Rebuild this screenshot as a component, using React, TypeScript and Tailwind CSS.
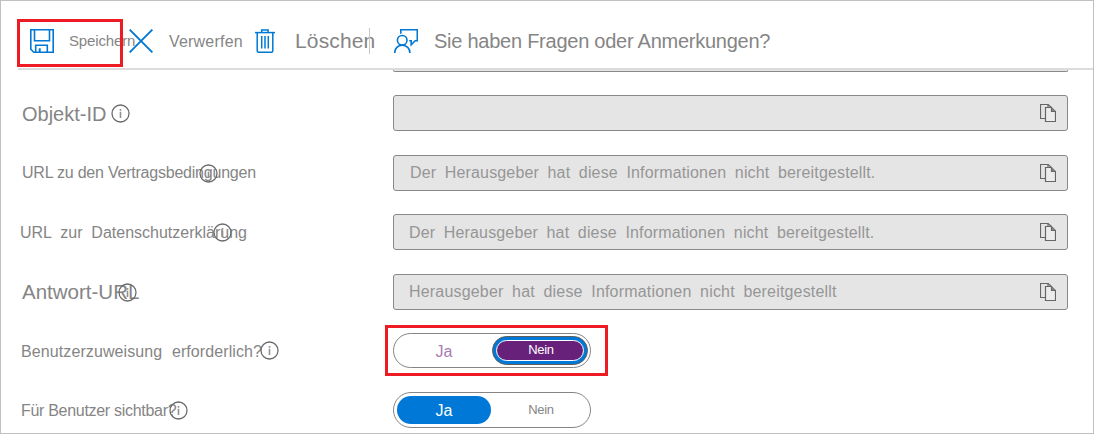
import type { ReactNode } from "react";

function InfoIcon() {
  return (
    <svg className="h-[19px] w-[19px] shrink-0" viewBox="0 0 19 19" fill="none">
      <circle cx="9.5" cy="9.5" r="8.5" stroke="#6a6a6a" strokeWidth="1.3" />
      <path d="M9.5 7.8V14M9.5 5v1.7" stroke="#909090" strokeWidth="1.6" />
    </svg>
  );
}

function CopyIcon() {
  return (
    <svg className="h-[18px] w-4 shrink-0" viewBox="0 0 16 18" fill="none" stroke="#666" strokeWidth="1.2">
      <path d="M5.5 14.5h-5V.5H8l3.5 3" />
      <path d="M5.5 3.5h6l4 4v10h-10z" fill="#ececec" />
      <path d="M11.5 3.5v4h4" fill="#888" />
      <path d="M8 .5v3" />
    </svg>
  );
}

function SaveIcon() {
  return (
    <svg className="h-6 w-6 shrink-0" viewBox="0 0 24 24" fill="none" stroke="#0078d4" strokeWidth="1.6">
      <path d="M.8.8h22.4v22.4H3.8l-3-3z" />
      <path d="M4.5.8v10.9h15V.8" />
      <path d="M5.7 23v-6.7h11.6V23" />
      <path d="M9.7 23v-3.7" strokeWidth="2" />
    </svg>
  );
}

function DiscardIcon() {
  return (
    <svg className="h-6 w-6 shrink-0" viewBox="0 0 24 24" fill="none" stroke="#0078d4" strokeWidth="1.9">
      <path d="M.6.6l22.8 22.8M23.4.6L.6 23.4" />
    </svg>
  );
}

function TrashIcon() {
  return (
    <svg className="h-6 w-5 shrink-0" viewBox="0 0 20 24" fill="none" stroke="#0078d4" strokeWidth="1.5">
      <path d="M0 3.6h20" />
      <path d="M6.7 3.5V.9h6.4v2.6" />
      <path d="M2.2 3.6v18.2q0 1.5 1.5 1.5h12.7q1.4 0 1.4-1.5V3.6" />
      <path d="M6.7 7v12.5M10 7v12.5M13.3 7v12.5" />
    </svg>
  );
}

function FeedbackIcon() {
  return (
    <svg className="h-6 w-6 shrink-0" viewBox="0 0 24 24" fill="none" stroke="#0078d4" strokeWidth="1.6">
      <path d="M6.8 4.8V.8h16.5v11h-2.1l-4 4v-4h-2" />
      <circle cx="8.2" cy="11.3" r="4.8" />
      <path d="M.7 24c0-4.5 3.2-7.8 7.6-7.8s7.6 3.3 7.6 7.8" />
    </svg>
  );
}

function Row({ label, className, children }: { label: ReactNode; className: string; children: ReactNode }) {
  return (
    <div className={`flex shrink-0 items-center ${className}`}>
      <div className="flex w-[392px] shrink-0 items-center whitespace-nowrap">
        {label}
        <InfoIcon />
      </div>
      {children}
    </div>
  );
}

function Field({ text, className = "" }: { text?: string; className?: string }) {
  return (
    <div className="flex h-9 w-[675px] items-center rounded-[3px] border border-[#888] bg-[#e5e5e5] pr-[11px]">
      <span className={`flex-1 whitespace-pre text-base leading-5 tracking-[0.15px] [word-spacing:4px] text-[#969696] ${className}`}>
        {text}
      </span>
      <CopyIcon />
    </div>
  );
}

export default function App() {
  return (
    <div className="relative flex h-[434px] w-[1094px] flex-col overflow-hidden border border-[#c0c0c0] bg-white font-['Liberation_Sans',Arial,sans-serif] text-[#858585]">
      <header className="ml-[17px] flex h-[69px] shrink-0 items-center whitespace-nowrap border-b-2 border-[#dcdcdc] pt-[13px]">
        <button className="relative flex w-[111px] shrink-0 items-center pl-3">
          <SaveIcon />
          <span className="ml-[15px] text-[15px] leading-5 tracking-[-0.15px]">Speichern</span>
          <span className="absolute -left-px -top-[10px] h-12 w-[106px] border-[3px] border-[#ed1c24]" />
        </button>
        <button className="flex w-[126px] shrink-0 items-center">
          <DiscardIcon />
          <span className="ml-4 pt-px text-base leading-5 tracking-[0.2px]">Verwerfen</span>
        </button>
        <button className="flex w-[114px] shrink-0 items-center">
          <TrashIcon />
          <span className="ml-5 text-[21px] leading-6 tracking-[0.15px]">Löschen</span>
        </button>
        <span className="mr-6 h-[26px] w-px bg-[#c8c6c4]" />
        <button className="flex shrink-0 items-center">
          <FeedbackIcon />
          <span className="ml-4 text-xl leading-6 tracking-[-0.25px]">Sie haben Fragen oder Anmerkungen?</span>
        </button>
      </header>

      <main className="flex flex-1 flex-col">
        <div className="ml-[392px] h-[2px] w-[675px] shrink-0 rounded-b-[3px] border-x border-b border-[#888] bg-[#e5e5e5]" />

        <Row className="mt-[23px] h-9" label={<span className="ml-[21px] w-[89px] shrink-0 pt-[2px] text-xl leading-6">Objekt-ID</span>}>
          <Field />
        </Row>
        <Row className="mt-6 h-9" label={<span className="ml-[21px] w-[177px] shrink-0 text-base leading-5 tracking-[-0.22px]">URL zu den Vertragsbedingungen</span>}>
          <Field className="pl-4" text="Der Herausgeber hat diese Informationen nicht bereitgestellt." />
        </Row>
        <Row className="mt-[23px] h-9" label={<span className="ml-[19px] w-[193px] shrink-0 pt-[2px] text-base leading-5 [word-spacing:4.4px]">URL zur Datenschutzerklärung</span>}>
          <Field className="pl-[15px] pt-px" text="Der Herausgeber hat diese Informationen nicht bereitgestellt." />
        </Row>
        <Row className="mt-6 h-9" label={<span className="ml-[21px] w-[96px] shrink-0 text-[20.5px] leading-6">Antwort-URL</span>}>
          <Field className="pl-[15px] tracking-[0.18px]" text="Herausgeber hat diese Informationen nicht bereitgestellt" />
        </Row>
        <Row className="mt-[23px] h-[35px]" label={<span className="ml-5 w-[239px] shrink-0 pt-[2px] text-base leading-5 tracking-[0.1px] [word-spacing:5px]">Benutzerzuweisung erforderlich?</span>}>
          <div className="relative flex h-[35px] w-[198px] items-center rounded-full border border-[#858585]">
            <span className="ml-[2px] w-24 pt-[2px] text-center text-base leading-5 text-[#a97bb5]">Ja</span>
            <div className="flex h-[29px] w-24 items-center rounded-full border border-[#605e5c] bg-[#0078d7] p-[3px]">
              <span className="flex h-full w-full items-center justify-center rounded-full border border-white bg-[#68217a] pb-[2px] pl-[2px] text-[13px] leading-4 tracking-[-0.3px] text-white">
                Nein
              </span>
            </div>
            <span className="absolute -left-[9px] -top-[9px] h-[51px] w-[223px] border-[3px] border-[#ed1c24]" />
          </div>
        </Row>
        <Row className="mt-6 h-9" label={<span className="ml-5 w-[148px] shrink-0 pt-px text-base leading-5 tracking-[-0.3px]">Für Benutzer sichtbar?</span>}>
          <div className="flex h-9 w-[198px] items-center rounded-full border border-[#858585] pl-[3px]">
            <span className="flex h-7 w-[94px] items-center justify-center rounded-full bg-[#0078d7] pt-[2px] text-base leading-5 text-white">Ja</span>
            <span className="ml-[2px] w-24 text-center text-[13px] leading-4 tracking-[-0.3px]">Nein</span>
          </div>
        </Row>
      </main>
    </div>
  );
}
